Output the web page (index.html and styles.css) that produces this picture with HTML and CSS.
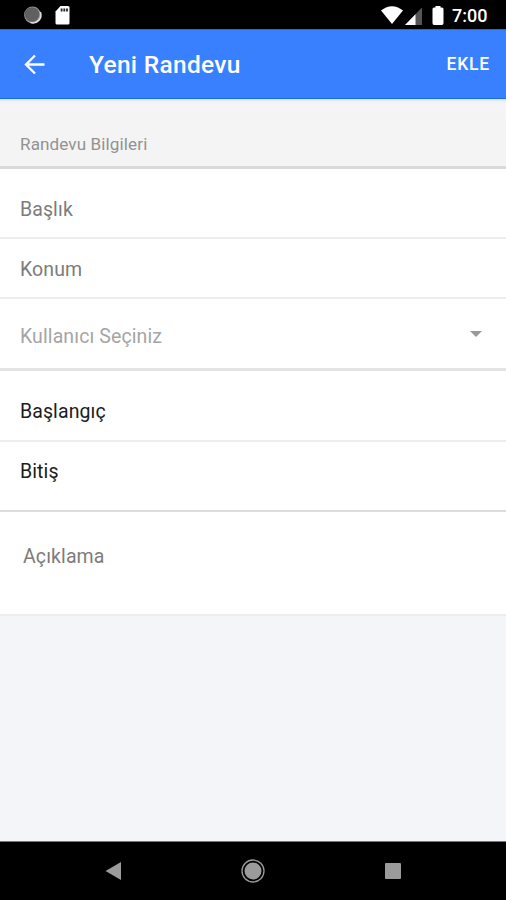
FILE: index.html
```html
<!DOCTYPE html>
<html lang="tr">
<head>
<meta charset="utf-8">
<title>Yeni Randevu</title>
<link rel="stylesheet" href="styles.css">
</head>
<body>
<div class="status">
  <svg class="status-left" width="50" height="22" viewBox="0 0 50 22">
    <circle cx="8.500" cy="11" r="8.400" fill="#999"/>
    <path d="M16.300 8A8 8 0 0 1 6.500 18.600" fill="none" stroke="#ddd" stroke-width="1.600"/>
    <circle cx="8" cy="10.500" r="7.300" fill="#606060"/>
    <path d="M36.500 2H44q1.500 0 1.500 1.500V19q0 1.500-1.500 1.500H33q-1.500 0-1.500-1.500V7.500Z" fill="#fff"/>
    <path d="M36.700 4.500h1.800v3h-1.800zM39.400 4.500h1.800v3h-1.800zM42.100 4.500h1.800v3h-1.800z" fill="#222"/>
  </svg>
  <div class="status-right">
    <svg width="64" height="22" viewBox="0 0 64 22">
      <path d="M1 6.500Q12 -2 23 6.500L12 20Z" fill="#fff"/>
      <path d="M42 3.500V21H25Z" fill="#555"/>
      <path d="M35.500 10.200V21H25Z" fill="#fff"/>
      <path d="M55.500 2h5v1.500h1.500q1.500 0 1.500 1.500V19q0 2-1.500 2h-8q-1.500 0-1.500-2V5q0-1.500 1.500-1.500h1.500Z" fill="#fff"/>
    </svg>
    <span class="clock">7:00</span>
  </div>
</div>
<header class="bar">
  <svg class="back" width="22" height="22" viewBox="0 0 22 22"><path d="M20.500 10.500H2.500M11 1.500L2 10.500L11 19.500" fill="none" stroke="#fff" stroke-width="2.300"/></svg>
  <h1>Yeni Randevu</h1>
  <span class="add">EKLE</span>
</header>
<main>
  <div class="row section"><span>Randevu Bilgileri</span></div>
  <div class="row title"><span>Başlık</span></div>
  <div class="row place"><span>Konum</span></div>
  <div class="row user"><span>Kullanıcı Seçiniz</span><svg class="caret" width="12" height="6" viewBox="0 0 12 6"><path d="M0 0H12L6 6Z" fill="#999"/></svg></div>
  <div class="row start"><span>Başlangıç</span></div>
  <div class="row end"><span>Bitiş</span></div>
  <div class="row note"><span>Açıklama</span></div>
</main>
<nav class="nav">
  <svg width="16" height="20" viewBox="0 0 16 20"><path d="M.5 10L16 1V19Z" fill="#9b9b9b"/></svg>
  <svg width="24" height="24" viewBox="0 0 24 24"><circle cx="12" cy="12" r="11" fill="none" stroke="#9b9b9b" stroke-width="1.300"/><circle cx="12" cy="12" r="8.500" fill="#9b9b9b"/></svg>
  <svg width="16" height="16" viewBox="0 0 16 16"><rect width="16" height="16" rx="1" fill="#9b9b9b"/></svg>
</nav>
</body>
</html>
```
FILE: styles.css
```css
* { box-sizing: border-box; }
body {
  margin: 0;
  height: 900px;
  display: flex;
  flex-direction: column;
  font-family: Roboto, sans-serif;
  background: #f3f5f9;
  overflow: hidden;
}
svg { display: block; flex: none; }
.status {
  height: 29px;
  flex: none;
  background: #000;
  display: flex;
  justify-content: space-between;
  padding: 4px 18px 0 24px;
}
.status-right { display: flex; gap: 8px; }
.clock {
  color: #fff;
  font-size: 18px;
  font-weight: 500;
  line-height: 24px;
  width: 36px;
  white-space: nowrap;
}
.bar {
  height: 70px;
  flex: none;
  background: #3880ff;
  border-top: 1px solid #2968c5;
  border-bottom: 1px solid #1471e8;
  color: #fff;
  display: flex;
  align-items: center;
  padding: 1px 16px 0 24px;
}
h1 {
  margin: 0 0 1px 43px;
  font-size: 24.5px;
  font-weight: 500;
  letter-spacing: .3px;
}
.add {
  margin-left: auto;
  margin-top: -2px;
  font-size: 17.5px;
  font-weight: 500;
  letter-spacing: .8px;
}
main { flex: 1; }
.row {
  display: flex;
  align-items: center;
  justify-content: space-between;
  padding: 0 24px 0 20px;
  background: #fff;
  border-bottom: 2px solid #ececec;
  font-size: 19.5px;
  line-height: 24px;
  letter-spacing: .1px;
  color: #7c7c7c;
}
.section {
  height: 70px;
  padding-top: 22px;
  background: linear-gradient(#dcdee2 0, #eff0f4 2px, #f5f5f7 5px, #f4f4f4 30px);
  border-bottom: 3px solid #dadada;
  font-size: 17.1px;
  color: #929292;
}
.title { height: 70px; padding-top: 13px; }
.place { height: 60px; padding-top: 3px; }
.user { height: 72px; padding-top: 6px; border-bottom: 3px solid #e4e4e4; color: #a5a5a5; }
.caret { margin-top: -5px; }
.start { height: 71px; padding-top: 12px; color: #1c1c1c; }
.end { height: 70px; padding-bottom: 9px; border-bottom-color: #dcdcdc; color: #1c1c1c; }
.note { height: 104px; padding-left: 23px; padding-bottom: 13px; }
.nav {
  height: 59px;
  flex: none;
  background: #000;
  border-top: 1px solid #777;
  display: flex;
  justify-content: space-between;
  align-items: center;
  padding: 0 105px 0 105px;
}
```
